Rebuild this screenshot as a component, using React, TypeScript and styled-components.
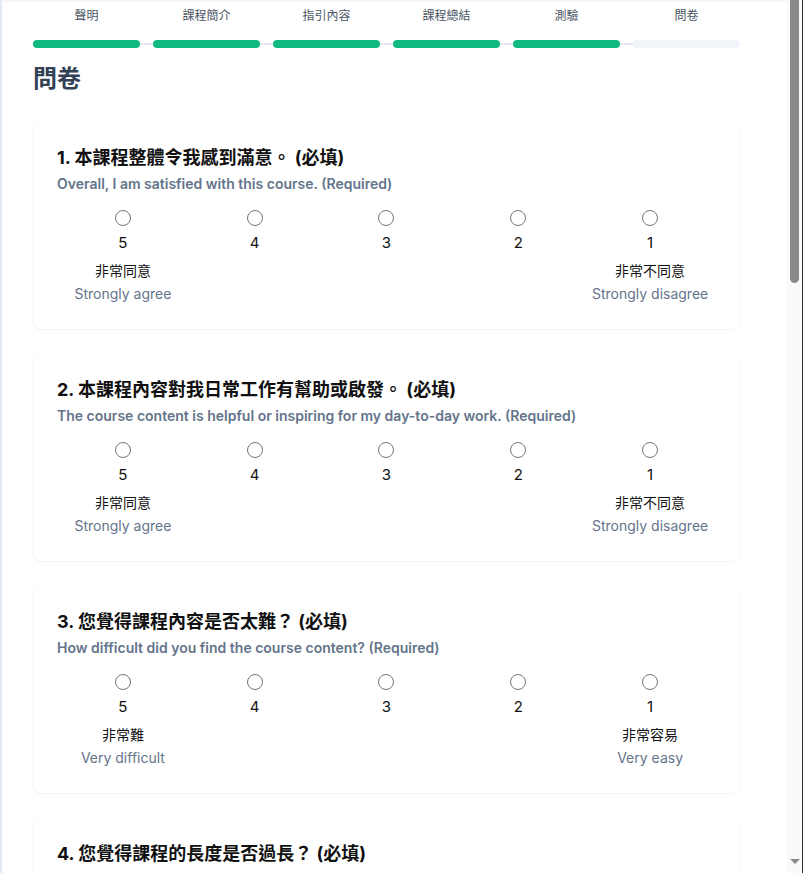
import React from 'react';
import styled, { createGlobalStyle } from 'styled-components';

// global
const GlobalStyle = createGlobalStyle`
  html, body {
    margin: 0;
    padding: 0;
    background: #ffffff;
    overflow: hidden;
  }
  body {
    font-family: Inter, "Noto Sans CJK TC", "Noto Sans", sans-serif;
    color: #111827;
  }
  * {
    box-sizing: border-box;
  }
`;

// style
const Frame = styled.div`
  display: flex;
  width: 803px;
  height: 873px;
  border-left: 2px solid #e2e9f2;
  border-right: 1px solid #2b2b2b;
`;

const Viewport = styled.div`
  flex: 1;
  overflow: hidden;
  border-top: 2px solid #f6f6f6;
`;

const Content = styled.main`
  padding: 6px 47px 40px 31px;
`;

const Steps = styled.ol`
  position: relative;
  display: grid;
  grid-template-columns: repeat(6, 1fr);
  column-gap: 13px;
  margin: 0;
  padding: 0;
  list-style: none;
  &::before {
    content: '';
    position: absolute;
    left: 0;
    right: 0;
    bottom: 3px;
    height: 2px;
    background: #e2e8f0;
  }
`;

const Step = styled.li`
  position: relative;
  display: flex;
  flex-direction: column;
  align-items: center;
  gap: 16px;
`;

const StepLabel = styled.span`
  font-size: 12px;
  line-height: 16px;
  color: #4b5563;
`;

const StepBar = styled.span<{ $done: boolean }>`
  width: 100%;
  height: 8px;
  border-radius: 4px;
  background: ${(p) => (p.$done ? '#10b981' : '#f1f5f9')};
`;

const PageTitle = styled.h1`
  margin: 15px 0 26px;
  font-size: 24px;
  line-height: 32px;
  font-weight: 700;
  color: #334155;
`;

const QuestionList = styled.div`
  display: flex;
  flex-direction: column;
  gap: 24px;
`;

const Card = styled.section`
  padding: 24px 24px 25px;
  border-radius: 8px;
  background: #ffffff;
  box-shadow: 0 1px 2px rgba(15, 23, 42, 0.04), 0 0 0 1px rgba(15, 23, 42, 0.015);
`;

const QuestionTitle = styled.h2`
  margin: 0;
  font-size: 18px;
  line-height: 26px;
  font-weight: 700;
  color: #111111;
`;

const QuestionSub = styled.p`
  margin: 3px 0 0;
  font-size: 14px;
  line-height: 20px;
  font-weight: 600;
  color: #64748b;
`;

const Scale = styled.div`
  display: grid;
  grid-template-columns: repeat(5, 1fr);
  margin-top: 16px;
  align-items: start;
`;

const Option = styled.label`
  display: flex;
  flex-direction: column;
  align-items: center;
  cursor: pointer;
`;

const Radio = styled.input`
  width: 16px;
  height: 16px;
  margin: 0;
  accent-color: #10b981;
`;

const Score = styled.span`
  margin-top: 7px;
  font-size: 15px;
  line-height: 20px;
  color: #111111;
`;

const AnchorZh = styled.span`
  margin-top: 8px;
  font-size: 14px;
  line-height: 20px;
  color: #111111;
`;

const AnchorEn = styled.span`
  margin-top: 3px;
  font-size: 14px;
  line-height: 20px;
  color: #64748b;
`;

const Rail = styled.div`
  display: flex;
  flex-direction: column;
  width: 15px;
  background: #fafafa;
`;

const Thumb = styled.div`
  width: 9px;
  height: 283px;
  margin-left: 3px;
  border-radius: 0 0 5px 5px;
  background: #8a8a8a;
`;

const RailSpace = styled.div`
  flex: 1;
`;

const RailArrow = styled.div`
  height: 22px;
  display: flex;
  justify-content: center;
  padding-top: 8px;
  &::after {
    content: '';
    width: 0;
    height: 0;
    border-left: 5px solid transparent;
    border-right: 5px solid transparent;
    border-top: 5px solid #8a8a8a;
  }
`;

// data
interface IQuestion {
  id: number;
  zh: string;
  en: string;
  high: [string, string];
  low: [string, string];
}

const steps = [
  { label: '聲明', done: true },
  { label: '課程簡介', done: true },
  { label: '指引內容', done: true },
  { label: '課程總結', done: true },
  { label: '測驗', done: true },
  { label: '問卷', done: false },
];

const questions: IQuestion[] = [
  {
    id: 1,
    zh: '本課程整體令我感到滿意。',
    en: 'Overall, I am satisfied with this course.',
    high: ['非常同意', 'Strongly agree'],
    low: ['非常不同意', 'Strongly disagree'],
  },
  {
    id: 2,
    zh: '本課程內容對我日常工作有幫助或啟發。',
    en: 'The course content is helpful or inspiring for my day-to-day work.',
    high: ['非常同意', 'Strongly agree'],
    low: ['非常不同意', 'Strongly disagree'],
  },
  {
    id: 3,
    zh: '您覺得課程內容是否太難？',
    en: 'How difficult did you find the course content?',
    high: ['非常難', 'Very difficult'],
    low: ['非常容易', 'Very easy'],
  },
  {
    id: 4,
    zh: '您覺得課程的長度是否過長？',
    en: 'Do you think the course is too long?',
    high: ['非常長', 'Far too long'],
    low: ['非常短', 'Far too short'],
  },
];

const scores = [5, 4, 3, 2, 1];

function Question({ q }: { q: IQuestion }) {
  return (
    <Card>
      <QuestionTitle>
        {q.id}. {q.zh} (必填)
      </QuestionTitle>
      <QuestionSub>{q.en} (Required)</QuestionSub>
      <Scale>
        {scores.map((s, i) => {
          const anchor = i === 0 ? q.high : i === scores.length - 1 ? q.low : null;
          return (
            <Option key={s}>
              <Radio type="radio" name={`q${q.id}`} value={s} />
              <Score>{s}</Score>
              {anchor && (
                <>
                  <AnchorZh>{anchor[0]}</AnchorZh>
                  <AnchorEn>{anchor[1]}</AnchorEn>
                </>
              )}
            </Option>
          );
        })}
      </Scale>
    </Card>
  );
}

// function
function App() {
  return (
    <>
      <GlobalStyle />
      <Frame>
        <Viewport>
          <Content>
            <Steps>
              {steps.map((step) => (
                <Step key={step.label}>
                  <StepLabel>{step.label}</StepLabel>
                  <StepBar $done={step.done} />
                </Step>
              ))}
            </Steps>
            <PageTitle>問卷</PageTitle>
            <QuestionList>
              {questions.map((q) => (
                <Question key={q.id} q={q} />
              ))}
            </QuestionList>
          </Content>
        </Viewport>
        <Rail>
          <Thumb />
          <RailSpace />
          <RailArrow />
        </Rail>
      </Frame>
    </>
  );
}

export default App;
